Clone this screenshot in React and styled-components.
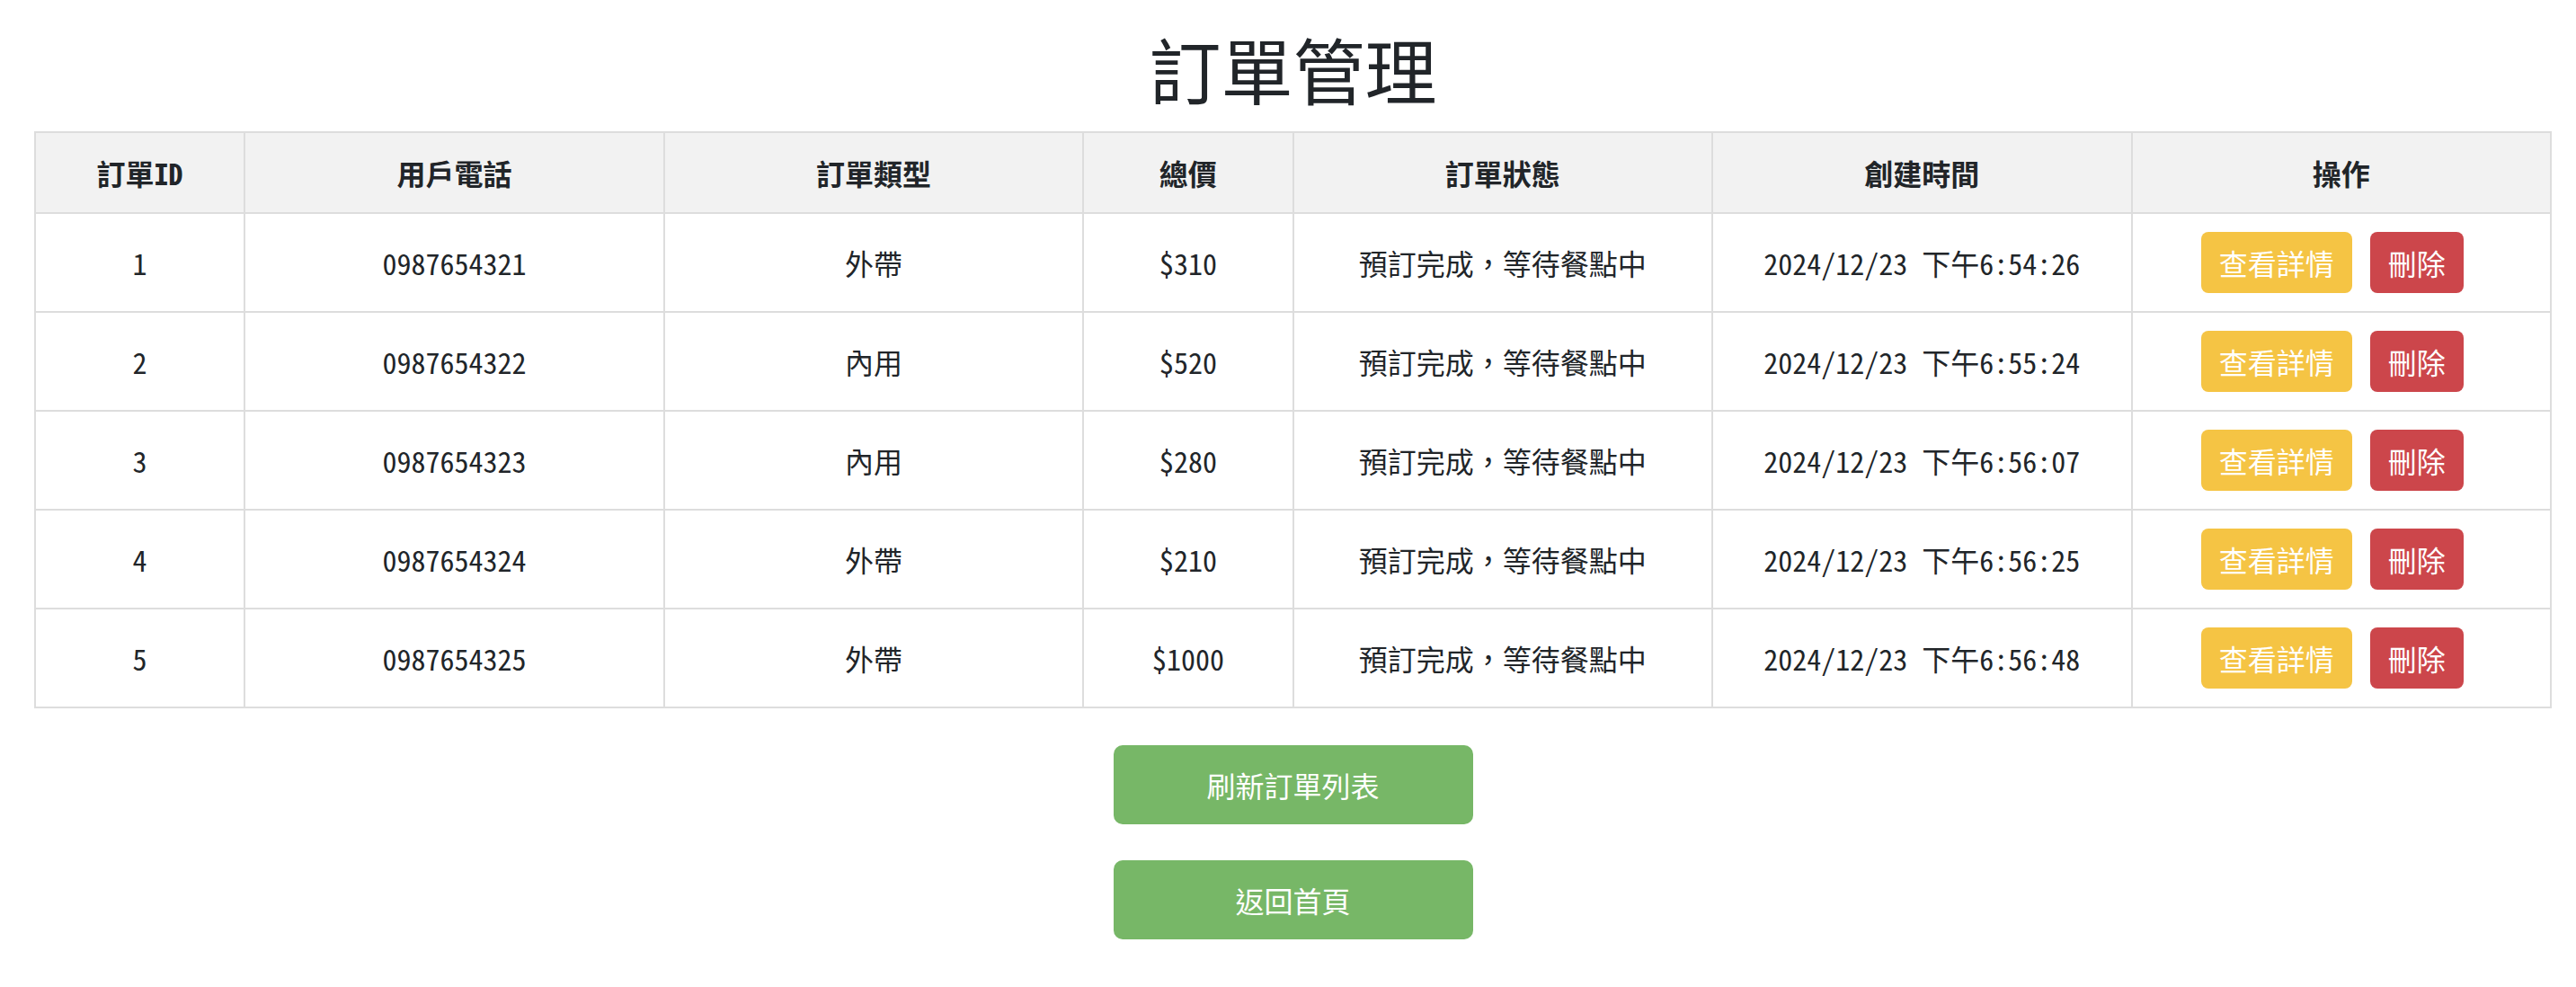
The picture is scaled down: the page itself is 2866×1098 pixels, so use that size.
import styled, { createGlobalStyle } from 'styled-components';

const GlobalStyle = createGlobalStyle`
  body {
    margin: 0;
    background: #ffffff;
    color: #212529;
    font-family: "Noto Sans Mono CJK TC", "Noto Sans CJK TC", sans-serif;
  }
`;

const PageContainer = styled.div`
  padding: 0 27px 0 38px;
  display: flex;
  flex-direction: column;
  align-items: center;
`;

const Title = styled.h1`
  font-size: 80px;
  font-weight: 500;
  line-height: 116px;
  margin: 17px 0 13px 0;
  color: #212529;
`;

const Table = styled.table`
  width: 100%;
  border-collapse: collapse;
  table-layout: fixed;
  font-size: 32px;
`;

const HeadCell = styled.th`
  background: #f2f2f2;
  border: 2px solid #dddddd;
  padding: 20px 10px;
  line-height: 48px;
  font-weight: bold;
  text-align: center;
`;

const Cell = styled.td`
  border: 2px solid #dddddd;
  padding: 20px 10px;
  line-height: 48px;
  text-align: center;
  vertical-align: middle;
`;

const ActionGroup = styled.div`
  display: flex;
  justify-content: center;
`;

const SmallButton = styled.button`
  font-family: "Noto Sans CJK TC", sans-serif;
  font-size: 32px;
  line-height: 48px;
  padding: 10px 20px;
  margin-right: 20px;
  border: none;
  border-radius: 8px;
  color: #ffffff;
  background: ${(p) => (p.$danger ? '#cc464b' : '#f5c444')};
  cursor: pointer;
`;

const ButtonStack = styled.div`
  display: flex;
  flex-direction: column;
  gap: 40px;
  margin-top: 41px;
`;

const BigButton = styled.button`
  width: 400px;
  font-family: "Noto Sans CJK TC", sans-serif;
  font-size: 32px;
  line-height: 48px;
  padding: 20px 0;
  border: none;
  border-radius: 10px;
  color: #ffffff;
  background: #77b767;
  cursor: pointer;
`;

const orders = [
  { id: 1, phone: '0987654321', type: '外帶', total: 310, time: '2024/12/23 下午6:54:26' },
  { id: 2, phone: '0987654322', type: '內用', total: 520, time: '2024/12/23 下午6:55:24' },
  { id: 3, phone: '0987654323', type: '內用', total: 280, time: '2024/12/23 下午6:56:07' },
  { id: 4, phone: '0987654324', type: '外帶', total: 210, time: '2024/12/23 下午6:56:25' },
  { id: 5, phone: '0987654325', type: '外帶', total: 1000, time: '2024/12/23 下午6:56:48' },
];

const columns = ['訂單ID', '用戶電話', '訂單類型', '總價', '訂單狀態', '創建時間', '操作'];
const widths = [1, 2, 2, 1, 2, 2, 2];

const App = () => {
  return (
    <>
      <GlobalStyle />
      <PageContainer>
        <Title>訂單管理</Title>
        <Table>
          <colgroup>
            {widths.map((w, i) => (
              <col key={i} style={{ width: `${(w / 12) * 100}%` }} />
            ))}
          </colgroup>
          <thead>
            <tr>
              {columns.map((c) => (
                <HeadCell key={c}>{c}</HeadCell>
              ))}
            </tr>
          </thead>
          <tbody>
            {orders.map((o) => (
              <tr key={o.id}>
                <Cell>{o.id}</Cell>
                <Cell>{o.phone}</Cell>
                <Cell>{o.type}</Cell>
                <Cell>${o.total}</Cell>
                <Cell>預訂完成，等待餐點中</Cell>
                <Cell>{o.time}</Cell>
                <Cell>
                  <ActionGroup>
                    <SmallButton>查看詳情</SmallButton>
                    <SmallButton $danger>刪除</SmallButton>
                  </ActionGroup>
                </Cell>
              </tr>
            ))}
          </tbody>
        </Table>
        <ButtonStack>
          <BigButton>刷新訂單列表</BigButton>
          <BigButton>返回首頁</BigButton>
        </ButtonStack>
      </PageContainer>
    </>
  );
};

export default App;
